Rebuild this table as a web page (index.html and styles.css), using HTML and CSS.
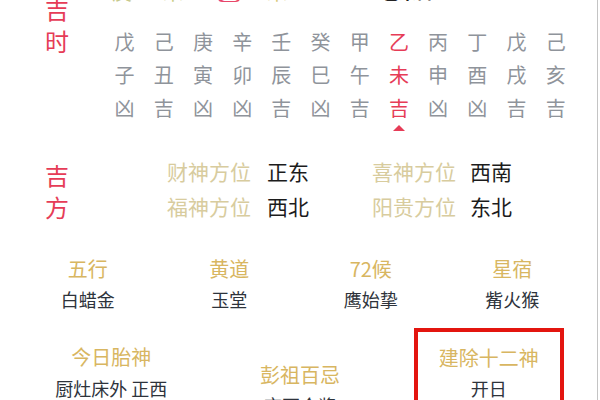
FILE: index.html
```html
<!DOCTYPE html>
<html lang="zh-CN">
<head>
<meta charset="utf-8">
<title>吉时吉方</title>
<link rel="stylesheet" href="styles.css">
</head>
<body>
<div class="page">
  <section class="shichen">
    <div class="side-label">吉<br>时</div>
    <div class="shichen-main">
      <div class="top-row">
        <span class="tp tp-a">庚</span>
        <span class="tp tp-b">未</span>
        <span class="tp tp-badge">巳</span>
        <span class="tp tp-c">未</span>
        <span class="tp-day">己未日</span>
        <span class="tp-time">13:00-14:59</span>
        <span class="tp-more">吉</span>
      </div>
      <div class="hour-grid">
        <span>戊</span><span>己</span><span>庚</span><span>辛</span><span>壬</span><span>癸</span><span>甲</span><span class="cur">乙</span><span>丙</span><span>丁</span><span>戊</span><span>己</span>
        <span>子</span><span>丑</span><span>寅</span><span>卯</span><span>辰</span><span>巳</span><span>午</span><span class="cur">未</span><span>申</span><span>酉</span><span>戌</span><span>亥</span>
        <span>凶</span><span>吉</span><span>凶</span><span>凶</span><span>吉</span><span>凶</span><span>吉</span><span class="cur">吉</span><span>凶</span><span>凶</span><span>吉</span><span>吉</span>
        <div class="marker"><i class="tri"></i></div>
      </div>
    </div>
  </section>

  <section class="fangwei">
    <div class="side-label fw-label">吉<br>方</div>
    <div class="pairs">
      <span class="pl">财神方位</span><span class="pv">正东</span>
      <span class="pl">喜神方位</span><span class="pv">西南</span>
      <span class="pl">福神方位</span><span class="pv">西北</span>
      <span class="pl">阳贵方位</span><span class="pv">东北</span>
    </div>
  </section>

  <section class="info4">
    <div class="item"><div class="it">五行</div><div class="iv">白蜡金</div></div>
    <div class="item"><div class="it">黄道</div><div class="iv">玉堂</div></div>
    <div class="item"><div class="it">72候</div><div class="iv">鹰始挚</div></div>
    <div class="item"><div class="it">星宿</div><div class="iv">觜火猴</div></div>
  </section>

  <section class="info3">
    <div class="item item-a"><div class="it">今日胎神</div><div class="iv">厨灶床外 正西</div></div>
    <div class="item item-b"><div class="it">彭祖百忌</div><div class="iv">亥不合酱</div></div>
    <div class="item item-c"><div class="it">建除十二神</div><div class="iv">开日</div></div>
  </section>
</div>
</body>
</html>
```

FILE: styles.css
```css
* { box-sizing: border-box; }
html, body {
  margin: 0;
  padding: 0;
  background: #ffffff;
  overflow: hidden;
}
body {
  font-family: "Noto Sans CJK SC", "Noto Sans", sans-serif;
  color: #222;
}
.page {
  width: 598px;
  height: 400px;
  border-right: 1px solid #c4c4c4;
  overflow: hidden;
}

/* ---------- 吉时 ---------- */
.shichen {
  display: flex;
  margin-top: -7px;
}
.side-label {
  width: 105px;
  flex: none;
  padding-left: 45px;
  font-size: 24px;
  line-height: 32px;
  color: #e63c57;
}
.shichen-main {
  display: flex;
  flex-direction: column;
}
.top-row {
  display: flex;
  align-items: center;
  height: 20px;
  margin-top: -11px;
  font-size: 20px;
  line-height: 20px;
  white-space: nowrap;
}
.tp { width: 20px; text-align: center; }
.tp-a { margin-left: 7px; color: #c6c98c; }
.tp-b { margin-left: 31px; color: #c9cc84; }
.tp-badge {
  margin-left: 35px;
  background: #e8476a;
  color: #fff;
  border-radius: 4px;
  width: 22px;
}
.tp-c { margin-left: 27px; color: #d7c778; }
.tp-day { margin-left: 95px; color: #222; font-weight: 700; font-size: 17px; }
.tp-time { margin-left: 8px; color: #9a9a9a; font-size: 17px; }
.tp-more { margin-left: 12px; color: #b8b8b8; font-size: 14px; }

.hour-grid {
  display: grid;
  grid-template-columns: repeat(12, 39.2px);
  grid-template-rows: 33px 33px 33px 8px;
  margin-top: 22.5px;
  font-size: 20px;
  line-height: 33px;
  color: #8f949b;
}
.hour-grid span { text-align: center; }
.hour-grid .cur { color: #e63c57; }
.hour-grid .marker {
  grid-column: 8;
  height: 8px;
  display: flex;
  justify-content: center;
  padding-top: 1px;
}
.tri {
  width: 0;
  height: 0;
  border-left: 6px solid transparent;
  border-right: 6px solid transparent;
  border-bottom: 6px solid #e63c57;
}

/* ---------- 吉方 ---------- */
.fangwei {
  display: flex;
  margin-top: 22.5px;
}
.fw-label { padding-top: 5px; }
.pairs {
  display: grid;
  grid-template-columns: 100px 105px 98px auto;
  padding-left: 62px;
  font-size: 21px;
  line-height: 34px;
}
.pl { color: #d8cc9e; }
.pv { color: #1c1c1c; }

/* ---------- info ---------- */
.info4, .info3 {
  display: grid;
  width: 566px;
  margin-left: 17px;
  text-align: center;
}
.info4 {
  grid-template-columns: repeat(4, 1fr);
  margin-top: 31px;
}
.info3 {
  grid-template-columns: repeat(3, 1fr);
  margin-top: 14px;
  align-items: start;
}
.it {
  font-size: 20px;
  line-height: 30px;
  color: #d8b661;
}
.iv {
  font-size: 18px;
  line-height: 30px;
  color: #2e333b;
}
.item-a { padding-top: 14px; }
.item-a .iv { line-height: 32px; }
.item-b { padding-top: 32px; }
.item-c {
  justify-self: center;
  width: 150px;
  height: 120px;
  border: 4px solid #e3150f;
  padding-top: 11px;
}
```
